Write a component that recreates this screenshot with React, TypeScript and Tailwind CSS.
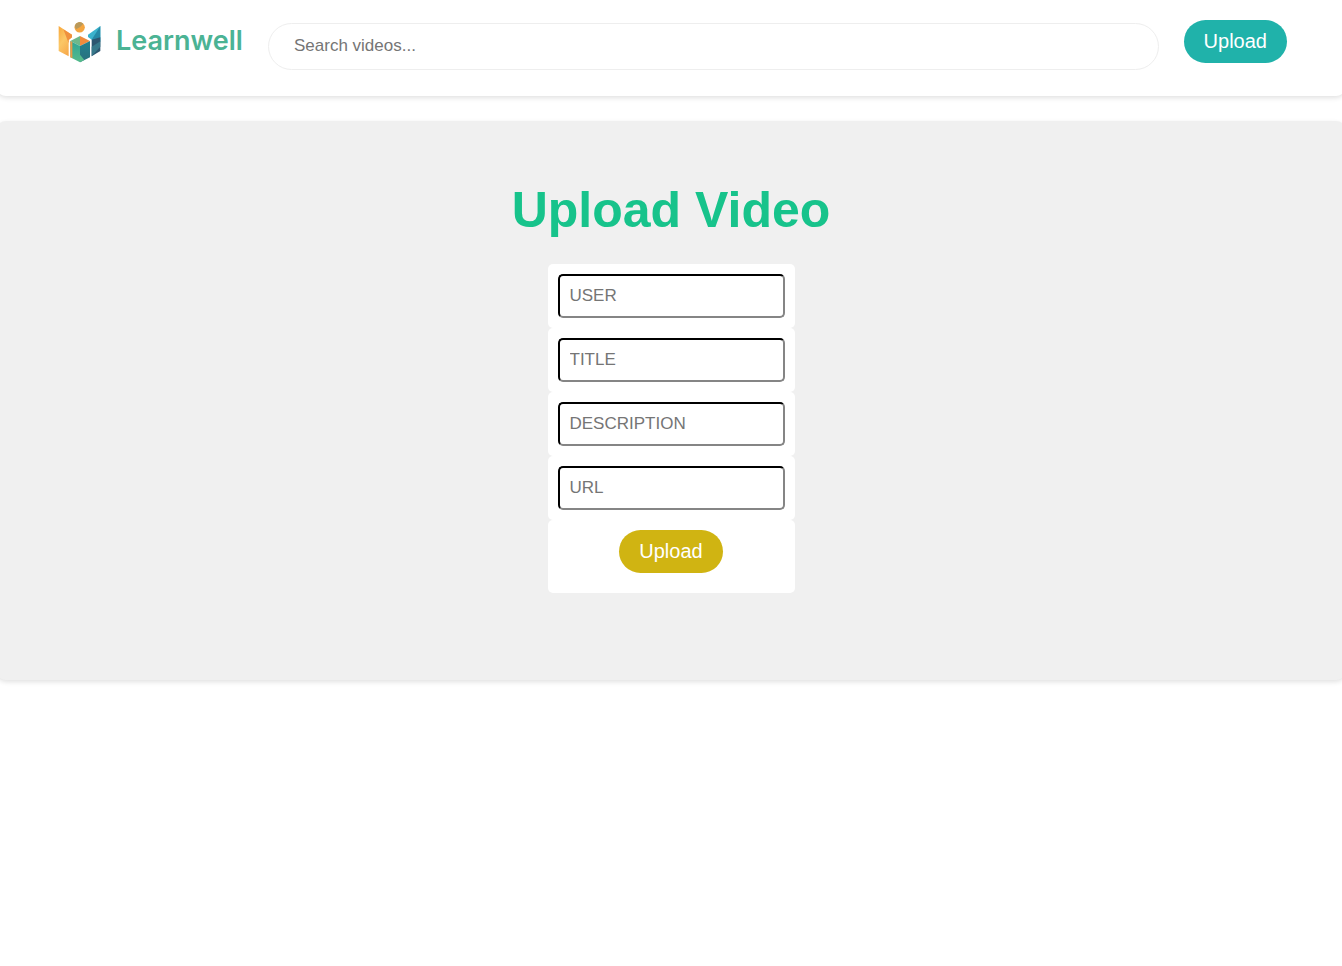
function Logo() {
  return (
    <svg viewBox="0 0 180 162" className="h-[54px] w-[60px] shrink-0" aria-hidden="true">
      <defs>
        <linearGradient id="wing" x1="0" y1="0" x2="0.6" y2="1">
          <stop offset="0" stopColor="#f9a83c" />
          <stop offset="0.5" stopColor="#fbc766" />
          <stop offset="1" stopColor="#f7a94a" />
        </linearGradient>
        <linearGradient id="box" x1="0" y1="0" x2="0" y2="1">
          <stop offset="0" stopColor="#2fa594" />
          <stop offset="1" stopColor="#55bb8c" />
        </linearGradient>
        <linearGradient id="side" x1="0" y1="0" x2="0" y2="1">
          <stop offset="0" stopColor="#1f8290" />
          <stop offset="1" stopColor="#2b6f7c" />
        </linearGradient>
      </defs>
      <path d="M26 36L66 62V70L56 78V127L26 111Z" fill="url(#wing)" />
      <path d="M40 46L66 62V70L56 78V88Z" fill="#f0903d" />
      <path d="M151 36L114 62V69L125 77L151 82Z" fill="#3bb2cc" />
      <path d="M151 36V84L125 77Z" fill="#2589a6" />
      <path d="M125 77L151 70V111L125 127Z" fill="#2d5670" />
      <path d="M125 98L151 82V98L125 127Z" fill="#37788a" />
      <path d="M90 66L61 81L90 96Z" fill="#6db88a" />
      <path d="M90 66L120 81L90 96Z" fill="#ef8b3d" />
      <path d="M61 81L90 96V145L61 130Z" fill="url(#box)" />
      <path d="M61 81L67 84V133L61 130Z" fill="#ea9a45" />
      <path d="M120 81L90 96V145L120 130Z" fill="url(#side)" />
      <path d="M90 122L103 138L90 145Z" fill="#55bb8c" />
      <circle cx="89" cy="40" r="15.5" fill="#f5a640" />
      <path d="M74 36A15.5 15.5 0 0 1 100 29Q90 42 78 46Z" fill="#b9995a" />
    </svg>
  );
}

function Field({ label }: { label: string }) {
  return (
    <div className="rounded-[5px] bg-white p-[10px]">
      <input
        type="text"
        aria-label={label}
        placeholder={label}
        className="block h-11 w-full rounded-[5px] border-2 border-t-black border-r-[#858585] border-b-[#858585] border-l-black px-[10px] text-[17px] placeholder:text-[#757575]"
      />
    </div>
  );
}

export default function App() {
  return (
    <div className="min-h-screen overflow-x-hidden bg-white font-['Liberation_Sans',Arial,sans-serif]">
      <header className="-mx-1 flex h-24 items-start rounded-b-[10px] bg-white pr-[59px] pl-[54px] shadow-[0_2px_5px_rgba(0,0,0,0.12)]">
        <a href="#" className="flex items-center pt-[14px]">
          <Logo />
          <span className="w-[158px] pl-[6px] font-['Inter',sans-serif] text-[27px] font-semibold text-[#4bb394]">
            Learnwell
          </span>
        </a>
        <input
          type="search"
          aria-label="Search videos"
          placeholder="Search videos..."
          className="mt-[23px] h-[47px] min-w-0 flex-1 rounded-full border border-[#eeeeee] px-[25px] pb-[2px] text-[17px] placeholder:text-[#757575]"
        />
        <button className="mt-5 ml-[25px] h-[43px] rounded-full bg-[#20b2aa] px-5 pb-[2px] text-xl text-white">
          Upload
        </button>
      </header>
      <main className="-mx-1 mt-[25px] flex flex-col items-center rounded-[10px] bg-[#f0f0f0] pt-[60px] pb-[87px] shadow-[0_2px_5px_rgba(0,0,0,0.12)]">
        <h1 className="mb-[25px] text-[50px] leading-[58px] font-bold text-[#17c38b]">Upload Video</h1>
        <form className="w-[247px]" onSubmit={(e) => e.preventDefault()}>
          <Field label="USER" />
          <Field label="TITLE" />
          <Field label="DESCRIPTION" />
          <Field label="URL" />
          <div className="flex justify-center rounded-[5px] bg-white pt-[10px] pb-5">
            <button
              type="submit"
              className="h-[43px] rounded-full bg-[#d0b412] px-5 pb-[2px] text-xl text-white"
            >
              Upload
            </button>
          </div>
        </form>
      </main>
    </div>
  );
}
